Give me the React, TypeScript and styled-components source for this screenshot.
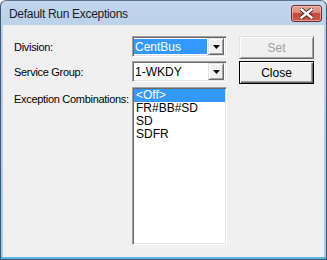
import styled, { createGlobalStyle } from "styled-components";

const GlobalStyle = createGlobalStyle`
  html, body {
    margin: 0;
    padding: 0;
    background: #ffffff;
  }
  * {
    box-sizing: border-box;
  }
`;

const exceptions = ["<Off>", "FR#BB#SD", "SD", "SDFR"];

const App: React.FC = () => {
  return (
    <>
      <GlobalStyle />
      <Window>
        <TitleBar>
          <Title>Default Run Exceptions</Title>
          <CloseBox>
            <svg width="13" height="11" viewBox="0 0 13 11">
              <path
                d="M1.5 1.5 L11.5 9.5 M11.5 1.5 L1.5 9.5"
                stroke="#4a2a2a"
                strokeWidth="4.2"
                strokeLinecap="square"
              />
              <path
                d="M1.5 1.5 L11.5 9.5 M11.5 1.5 L1.5 9.5"
                stroke="#ffffff"
                strokeWidth="2.4"
                strokeLinecap="square"
              />
            </svg>
          </CloseBox>
        </TitleBar>
        <Client>
          <Form>
            <Label>Division:</Label>
            <Combo>
              <ComboText selected>CentBus</ComboText>
              <DropButton>
                <Arrow />
              </DropButton>
            </Combo>
            <Label>Service Group:</Label>
            <Combo>
              <ComboText>1-WKDY</ComboText>
              <DropButton>
                <Arrow />
              </DropButton>
            </Combo>
            <Label top>Exception Combinations:</Label>
            <ListBox>
              {exceptions.map((item, i) => (
                <ListItem key={item} selected={i === 0}>
                  {item}
                </ListItem>
              ))}
            </ListBox>
          </Form>
          <Buttons>
            <PushButton disabled>Set</PushButton>
            <PushButton isDefault>Close</PushButton>
          </Buttons>
        </Client>
      </Window>
    </>
  );
};

export default App;

const Arrow: React.FC = () => (
  <svg width="7" height="4" viewBox="0 0 7 4">
    <polygon points="0,0 7,0 3.5,4" fill="#000000" />
  </svg>
);

const Window = styled.div`
  width: 327px;
  height: 260px;
  display: flex;
  flex-direction: column;
  border: 1px solid #3e5670;
  border-top-color: #5a7694;
  border-radius: 6px 6px 0 0;
  background: linear-gradient(#c2d6ec, #b9d1ea 30px, #a9c9ea);
  padding: 0 2px 2px 2px;
  box-shadow: inset 0 -2px 0 #58b6e6;
`;

const TitleBar = styled.div`
  height: 24px;
  display: flex;
  align-items: center;
  justify-content: space-between;
  padding: 0 2px 0 6px;
`;

const Title = styled.div`
  font-family: "Liberation Sans", Arial, sans-serif;
  font-size: 12px;
  letter-spacing: -0.3px;
  color: #1b1b2b;
  margin-top: 2px;
`;

const CloseBox = styled.div`
  width: 31px;
  height: 17px;
  margin-top: 1px;
  display: flex;
  align-items: center;
  justify-content: center;
  border: 1px solid #6b2e2e;
  border-radius: 3px;
  background: linear-gradient(#e3a597, #d8877a 45%, #c4493b 50%, #c9584a);
  box-shadow: inset 0 0 0 1px rgba(255, 210, 200, 0.55);
`;

const Client = styled.div`
  flex: 1;
  display: flex;
  gap: 12px;
  background: #f0f0f0;
  padding: 11px 0 0 11px;
`;

const Form = styled.div`
  display: grid;
  grid-template-columns: 118px 95px;
  grid-template-rows: 21px 21px 159px;
  row-gap: 4px;
  font-family: "Liberation Sans", Arial, sans-serif;
  font-size: 11px;
  color: #000000;
`;

const Label = styled.div<{ top?: boolean }>`
  display: flex;
  align-items: ${(p) => (p.top ? "flex-start" : "center")};
  padding-top: ${(p) => (p.top ? "7px" : "0")};
  letter-spacing: -0.3px;
  white-space: nowrap;
`;

const Combo = styled.div`
  display: flex;
  align-items: stretch;
  background: #ffffff;
  border: 1px solid;
  border-color: #a0a0a0 #ffffff #ffffff #a0a0a0;
  box-shadow: inset 1px 1px #696969, inset -1px -1px #e3e3e3;
  padding: 1px 2px 1px 1px;
`;

const ComboText = styled.div<{ selected?: boolean }>`
  flex: 1;
  display: flex;
  align-items: center;
  margin: 1px 1px 1px 0;
  padding-left: 1px;
  background: ${(p) => (p.selected ? "#3399ff" : "transparent")};
  color: ${(p) => (p.selected ? "#ffffff" : "#000000")};
  font-size: 12px;
`;

const DropButton = styled.div`
  width: 16px;
  display: flex;
  align-items: center;
  justify-content: center;
  background: #f0f0f0;
  border: 1px solid;
  border-color: #e3e3e3 #696969 #696969 #e3e3e3;
  box-shadow: inset 1px 1px #ffffff, inset -1px -1px #a0a0a0;
`;

const ListBox = styled.div`
  margin-top: 1px;
  background: #ffffff;
  border: 1px solid;
  border-color: #a0a0a0 #ffffff #ffffff #a0a0a0;
  box-shadow: inset 1px 1px #696969, inset -1px -1px #e3e3e3;
  padding: 1px;
  font-size: 12px;
`;

const ListItem = styled.div<{ selected?: boolean }>`
  height: 13px;
  line-height: 13px;
  padding-left: 2px;
  background: ${(p) => (p.selected ? "#3399ff" : "transparent")};
  color: ${(p) => (p.selected ? "#ffffff" : "#000000")};
`;

const Buttons = styled.div`
  display: flex;
  flex-direction: column;
  gap: 2px;
`;

const PushButton = styled.div<{ disabled?: boolean; isDefault?: boolean }>`
  width: 75px;
  height: 23px;
  display: flex;
  align-items: center;
  justify-content: center;
  font-family: "Liberation Sans", Arial, sans-serif;
  font-size: 12px;
  color: ${(p) => (p.disabled ? "#a0a0a0" : "#000000")};
  background: #f0f0f0;
  border: 1px solid;
  border-color: ${(p) =>
    p.isDefault ? "#000000" : "#e3e3e3 #696969 #696969 #e3e3e3"};
  box-shadow: ${(p) =>
    p.isDefault
      ? "inset 1px 1px #ffffff, inset -1px -1px #696969, inset -2px -2px #a0a0a0"
      : "inset 1px 1px #ffffff, inset -1px -1px #a0a0a0"};
`;
